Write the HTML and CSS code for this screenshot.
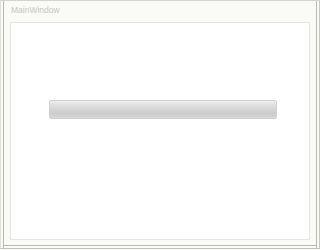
FILE: index.html
```html
<!DOCTYPE html>
<html>
<head>
<meta charset="utf-8">
<link rel="stylesheet" href="styles.css">
</head>
<body>
<div class="window">
  <div class="title">MainWindow</div>
  <div class="panel">
    <div class="progress"></div>
  </div>
</div>
</body>
</html>
```
FILE: styles.css
```css
html, body {
  margin: 0;
  padding: 0;
  width: 320px;
  height: 250px;
  background: #fafaf6;
  overflow: hidden;
}
.window {
  box-sizing: border-box;
  width: 320px;
  height: 249px;
  border-top: 1px solid #d4d4d0;
  border-left: 1px solid #e0e0dc;
  border-right: 1px solid #c8c8c4;
  border-bottom: 1px solid #c0c0bc;
  box-shadow: inset 2px 0 0 #fafaf6, inset 3px 0 0 #b8b8b4, inset -2px 0 0 #fafaf6, inset -3px 0 0 #b8b8b4, inset 0 -2px 0 #fafaf6, inset 0 -3px 0 #b8b8b4;
  display: flex;
  flex-direction: column;
  padding: 3px 9px 8px 9px;
  font-family: "Liberation Sans", Arial, sans-serif;
}
.title {
  font-size: 8.5px;
  line-height: 12px;
  color: #c6c6c2;
  height: 18px;
  padding-left: 1px;
}
.panel {
  flex: 1;
  background: #ffffff;
  border: 1px solid #e4e4e0;
  display: flex;
  align-items: flex-start;
  padding: 77px 32px 0 38px;
}
.progress {
  flex: 1;
  height: 17px;
  border: 1px solid #d0d0d0;
  border-radius: 2px;
  background: linear-gradient(to bottom, #efefef 0%, #e0e0e0 25%, #d4d4d4 50%, #cbcbcb 75%, #d8d8d8 100%);
}
```
